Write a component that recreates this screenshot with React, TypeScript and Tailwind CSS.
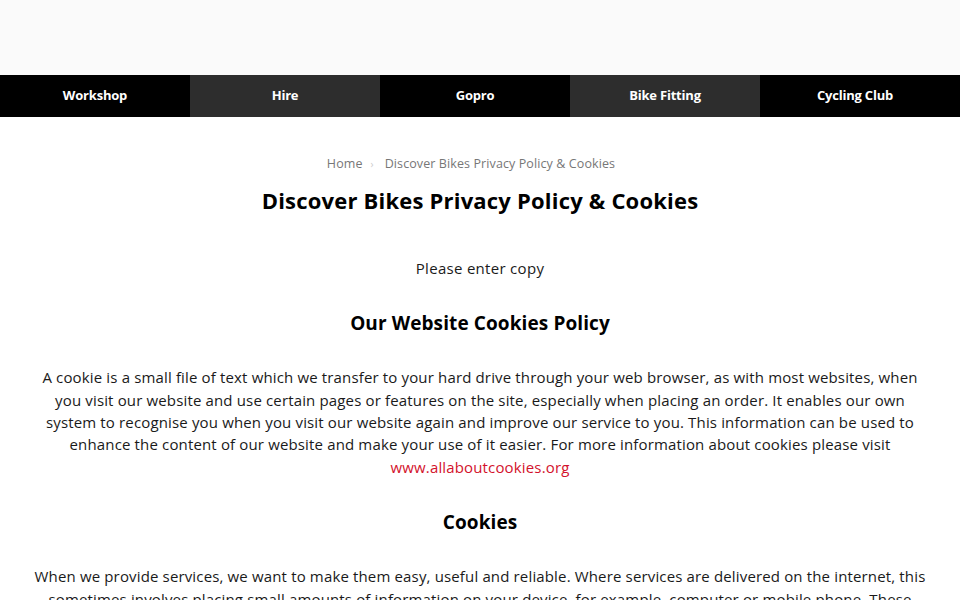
const navItems = [
  { label: 'Workshop', dark: false },
  { label: 'Hire', dark: true },
  { label: 'Gopro', dark: false },
  { label: 'Bike Fitting', dark: true },
  { label: 'Cycling Club', dark: false },
]

const App = () => {
  return (
    <div className="min-h-screen bg-white font-['Open_Sans',sans-serif] text-[#1a1a1a]">
      {/* Top header strip */}
      <header className="h-[75px] bg-[#fafafa]" />

      {/* Category nav */}
      <nav className="grid h-[42px] grid-cols-[repeat(5,190px)] bg-black">
        {navItems.map((item) => (
          <a
            key={item.label}
            href="#"
            className={`flex items-center justify-center text-[13px] font-bold tracking-[-0.2px] text-white ${
              item.dark ? 'bg-[#2d2d2d]' : 'bg-black'
            }`}
          >
            {item.label}
          </a>
        ))}
      </nav>

      <main className="px-[30px] text-center">
        {/* Breadcrumb */}
        <div className="mt-[38px] flex items-center justify-center pr-[18px] text-[12.5px] tracking-[0.1px] text-[#777]">
          <a href="#">Home</a>
          <span className="ml-[8px] mr-[11px] text-[10px] text-[#ccc]">›</span>
          <span>Discover Bikes Privacy Policy &amp; Cookies</span>
        </div>

        <h1 className="mt-[11px] text-[22px] font-bold leading-[30px] tracking-[0.2px] text-black">
          Discover Bikes Privacy Policy &amp; Cookies
        </h1>

        <p className="mt-[42px] text-[15px] leading-[22.4px] tracking-[0.3px]">Please enter copy</p>

        <h2 className="mt-[31px] text-[19px] font-bold leading-[26px] tracking-[0.1px] text-black">
          Our Website Cookies Policy
        </h2>

        <p className="mt-[30px] text-[15px] leading-[22.4px] tracking-[0.15px]">
          A cookie is a small file of text which we transfer to your hard drive through your web browser, as with
          most websites, when you visit our website and use certain pages or features on the site, especially when
          placing an order. It enables our own system to recognise you when you visit our website again and
          improve our service to you. This information can be used to enhance the content of our website and make
          your use of it easier. For more information about cookies please visit{' '}
          <a href="#" className="text-[#d3122c]">
            www.allaboutcookies.org
          </a>
        </p>

        <h2 className="mt-[31px] text-[19px] font-bold leading-[26px] tracking-[0.1px] text-black">Cookies</h2>

        <p className="mt-[30px] text-[15px] leading-[22.4px] tracking-[0.15px]">
          When we provide services, we want to make them easy, useful and reliable. Where services are delivered
          on the internet, this sometimes involves placing small amounts of information on your device, for
          example, computer or mobile phone. These include small files known as cookies. They cannot be used to
          identify you personally.
        </p>
      </main>
    </div>
  )
}

export default App
